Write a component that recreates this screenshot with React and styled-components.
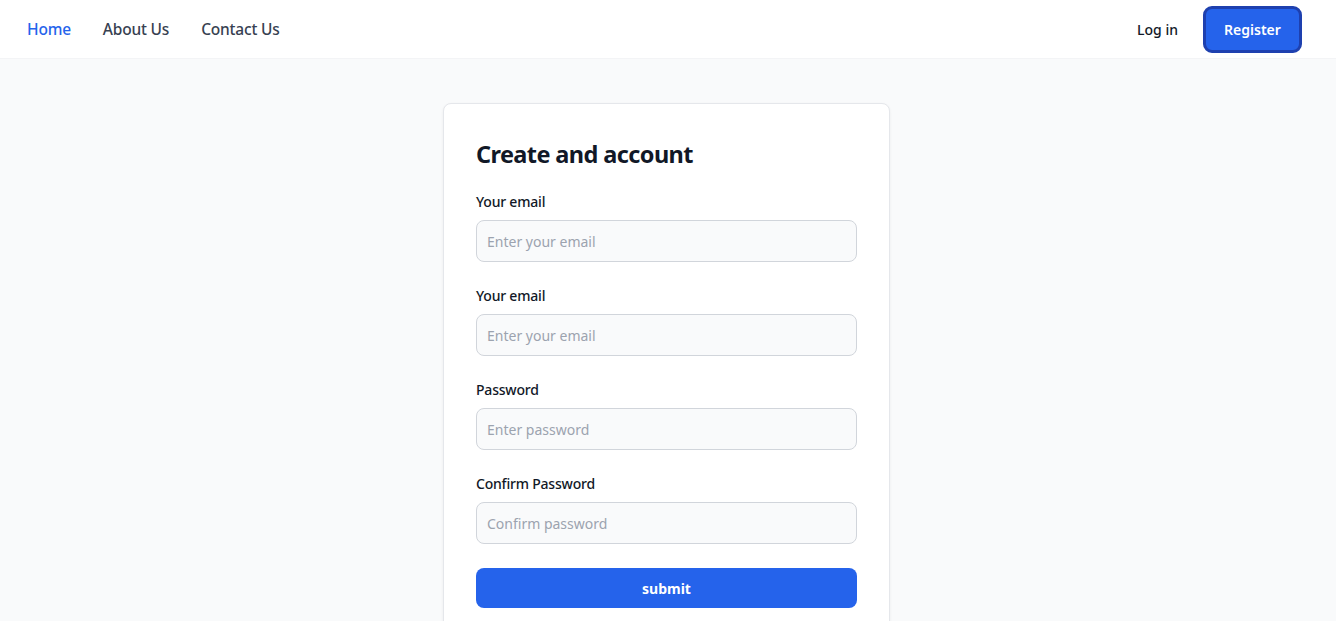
import React from 'react'
import styled, { createGlobalStyle } from 'styled-components'

const GlobalStyle = createGlobalStyle`
    * {
        box-sizing: border-box;
    }
    body {
        margin: 0;
        background: #f9fafb;
        font-family: "Noto Sans", "Open Sans", sans-serif;
        color: #111827;
    }
`

const fields = [
    { label: 'Your email', placeholder: 'Enter your email', type: 'email' },
    { label: 'Your email', placeholder: 'Enter your email', type: 'email' },
    { label: 'Password', placeholder: 'Enter password', type: 'password' },
    { label: 'Confirm Password', placeholder: 'Confirm password', type: 'password' },
]

function App() {
    return (
        <>
            <GlobalStyle />
            <NavBar>
                <NavLinks>
                    <NavLink href="#" $active>Home</NavLink>
                    <NavLink href="#">About Us</NavLink>
                    <NavLink href="#">Contact Us</NavLink>
                </NavLinks>
                <NavActions>
                    <LoginLink href="#">Log in</LoginLink>
                    <RegisterButton>Register</RegisterButton>
                </NavActions>
            </NavBar>
            <Main>
                <Card>
                    <Title>Create and account</Title>
                    <Form onSubmit={(e) => e.preventDefault()}>
                        {fields.map((f, i) => (
                            <Field key={i}>
                                <Label>{f.label}</Label>
                                <Input type={f.type} placeholder={f.placeholder} />
                            </Field>
                        ))}
                        <SubmitButton type="submit">submit</SubmitButton>
                    </Form>
                </Card>
            </Main>
        </>
    )
}

const NavBar = styled.nav`
    height: 59px;
    background: #fff;
    border-bottom: 1px solid #f3f4f6;
    display: flex;
    align-items: center;
    justify-content: space-between;
    padding: 0 34px 0 27px;
`

const NavLinks = styled.div`
    display: flex;
    align-items: center;
    gap: 32px;
`

const NavLink = styled.a`
    font-size: 15.5px;
    font-weight: 500;
    letter-spacing: -0.2px;
    text-decoration: none;
    color: ${(p) => (p.$active ? '#2563eb' : '#374151')};
`

const NavActions = styled.div`
    display: flex;
    align-items: center;
    gap: 25px;
`

const LoginLink = styled.a`
    font-size: 14px;
    font-weight: 500;
    color: #111827;
    text-decoration: none;
`

const RegisterButton = styled.button`
    font-family: inherit;
    width: 99px;
    height: 47px;
    background: #2563eb;
    color: #fff;
    font-size: 14px;
    font-weight: 600;
    border: 3px solid #1e40af;
    border-radius: 9px;
    cursor: pointer;
`

const Main = styled.main`
    display: flex;
    justify-content: center;
    padding: 44px 3px 0 0;
`

const Card = styled.div`
    width: 447px;
    background: #fff;
    border: 1px solid #e5e7eb;
    border-radius: 8px;
    box-shadow: 0 1px 3px rgba(0, 0, 0, 0.06);
    padding: 32px 32px 40px;
`

const Title = styled.h1`
    margin: 0 0 20px;
    font-size: 23.5px;
    line-height: 36px;
    font-weight: 700;
    letter-spacing: -0.6px;
    color: #111827;
`

const Form = styled.form`
    display: flex;
    flex-direction: column;
    gap: 24px;
`

const Field = styled.div`
    display: flex;
    flex-direction: column;
    gap: 8px;
`

const Label = styled.label`
    font-size: 14px;
    line-height: 20px;
    font-weight: 500;
    letter-spacing: -0.2px;
    color: #111827;
`

const Input = styled.input`
    height: 42px;
    width: 100%;
    background: #f9fafb;
    border: 1px solid #d1d5db;
    border-radius: 8px;
    padding: 0 10px;
    font-family: inherit;
    font-size: 14px;
    color: #111827;
    &::placeholder {
        color: #9ca3af;
    }
`

const SubmitButton = styled.button`
    height: 40px;
    width: 100%;
    background: #2563eb;
    color: #fff;
    border: none;
    border-radius: 8px;
    font-family: inherit;
    font-size: 14px;
    font-weight: 700;
    cursor: pointer;
`

export default App
